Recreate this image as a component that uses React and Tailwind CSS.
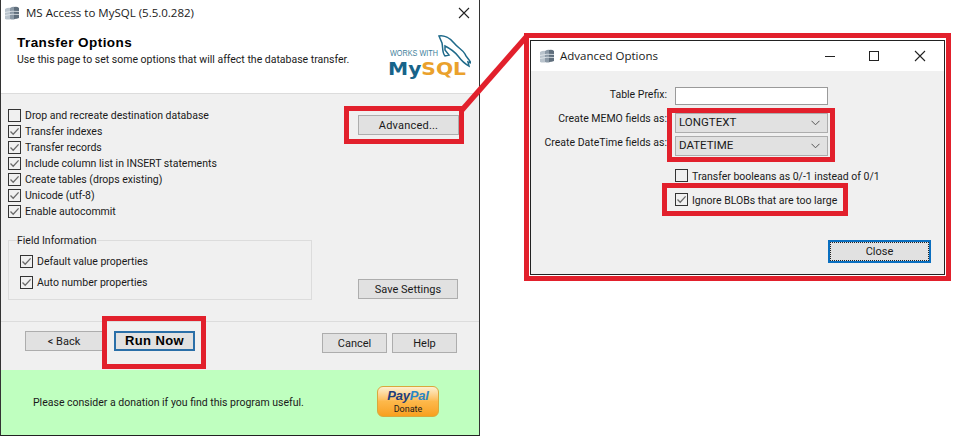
import React from "react";

const ui = "font-['Roboto',sans-serif] text-[10.5px] tracking-normal text-[#1a1a1a]";

const DbIcon = () => (
  <svg width="16" height="16" viewBox="0 0 16 16" className="shrink-0">
    <path d="M1 4 Q4 2 7 3 L7 14 Q4 15 1 14 Z" fill="#b9c3cc" />
    <path d="M6 3 Q9 1 11 2 L11 14 Q9 15 6 14 Z" fill="#8b99a6" />
    <path d="M10 2 Q13 1 15 3 L15 13 Q13 14 10 14 Z" fill="#5f6e7c" />
    <path d="M1 7.5 Q8 5.5 15 6.5 M1 10.5 Q8 8.5 15 9.5" stroke="#e6ebef" strokeWidth="0.8" fill="none" />
  </svg>
);

const Check = ({ checked, label, className = "" }) => (
  <div className={`flex items-center ${className}`}>
    <span className="flex h-[13px] w-[13px] shrink-0 items-center justify-center border border-[#333] bg-[#f0f0f0]">
      {checked && (
        <svg width="11" height="11" viewBox="0 0 11 11">
          <path d="M1.5 5.5 L4.2 8.3 L9.6 2.4" fill="none" stroke="#6b6b6b" strokeWidth="1.3" />
        </svg>
      )}
    </span>
    <span className="ml-[4px] mt-[2px] whitespace-nowrap">{label}</span>
  </div>
);

const Btn = ({ children, className = "" }) => (
  <div className={`flex h-[20px] items-center justify-center border border-[#adadad] bg-[#e1e1e1] pt-[2px] text-[11px] ${className}`}>
    {children}
  </div>
);

const Select = ({ value }) => (
  <div className="flex h-[20px] w-[153px] items-center justify-between border border-[#adadad] bg-[#e1e1e1] pl-[3px] pr-[7px]">
    <span className="text-[11.5px]">{value}</span>
    <svg width="9" height="6" viewBox="0 0 9 6">
      <path d="M0.5 0.8 L4.5 4.8 L8.5 0.8" fill="none" stroke="#555" strokeWidth="1" />
    </svg>
  </div>
);

const MysqlLogo = () => (
  <svg width="84" height="46" viewBox="0 0 84 46" className="shrink-0">
    <path
      d="M52 1 C57 0 63 3 67 8 C71 13 76 15 78 19 C79 22 82 24 84 28 L81 27 L82 31 C78 29 74 25 71 21 C67 16 62 13 58 11 L58 15 L62 20 L58 21 C55 18 56 12 55 8 Z"
      fill="white"
      stroke="#1f6a8a"
      strokeWidth="1.5"
    />
    <text x="3" y="21" fontFamily="Liberation Sans, sans-serif" fontSize="9" textLength="48" lengthAdjust="spacingAndGlyphs" fill="#3f7f9c">
      WORKS WITH
    </text>
    <text x="1" y="40" fontFamily="DejaVu Sans, sans-serif" fontWeight="700" fontSize="18" textLength="78" lengthAdjust="spacingAndGlyphs">
      <tspan fill="#17648a">My</tspan>
      <tspan fill="#eaa12c">SQL</tspan>
    </text>
  </svg>
);

const PayPal = () => (
  <div className="mb-[2px] flex h-[31px] w-[62px] flex-col items-center rounded-[6px] border border-[#d9a83c] bg-gradient-to-b from-[#fdf0cf] via-[#fdb84a] to-[#f8a01c]">
    <span className="mt-[1px] font-['Liberation_Sans',sans-serif] text-[13px] leading-[16px] font-bold italic tracking-[-0.2px] text-[#1f3d7a]">
      Pay<span className="text-[#2a86c5]">Pal</span>
    </span>
    <span className="text-[9px] leading-[11px] text-[#1a1a1a]">Donate</span>
  </div>
);

const MainWindow = () => (
  <div className={`absolute left-0 top-0 flex h-[436px] w-[480px] flex-col border-x border-b border-x-[#333] border-b-[#222] bg-white ${ui}`}>
    <div className="flex h-[26px] shrink-0 items-center pl-[3px] pr-[9px]">
      <DbIcon />
      <span className="ml-[6px] font-['Open_Sans',sans-serif] text-[11.5px]">MS Access to MySQL (5.5.0.282)</span>
      <svg width="12" height="12" viewBox="0 0 12 12" className="ml-auto">
        <path d="M1 1 L11 11 M11 1 L1 11" stroke="#222" strokeWidth="1.1" />
      </svg>
    </div>
    <div className="flex h-[68px] shrink-0 items-start justify-between border-b border-[#dcdcdc] pl-[16px] pr-[8px]">
      <div className="pt-[8px]">
        <h1 className="font-['Liberation_Sans',sans-serif] text-[13.5px] leading-[17px] font-bold tracking-[0.45px] text-black">Transfer Options</h1>
        <p className="mt-[2px] leading-[14px]">Use this page to set some options that will affect the database transfer.</p>
      </div>
      <div className="pt-[9px]">
        <MysqlLogo />
      </div>
    </div>
    <div className="flex h-[227px] shrink-0 justify-between bg-[#f0f0f0] pl-[7px] pr-[20px] pt-[13px]">
      <div className="flex w-[304px] flex-col">
        <Check label="Drop and recreate destination database" className="h-[16px]" />
        <Check checked label="Transfer indexes" className="h-[16px]" />
        <Check checked label="Transfer records" className="h-[16px]" />
        <Check checked label="Include column list in INSERT statements" className="h-[16px]" />
        <Check checked label="Create tables (drops existing)" className="h-[16px]" />
        <Check checked label="Unicode (utf-8)" className="h-[16px]" />
        <Check checked label="Enable autocommit" className="h-[16px]" />
        <fieldset className="mt-[14px] h-[67px] border border-[#dcdcdc] pl-[11px]">
          <legend className="-ml-[3px] translate-y-[1px] leading-[14px]">Field Information</legend>
          <Check checked label="Default value properties" className="mt-[6px] h-[16px]" />
          <Check checked label="Auto number properties" className="mt-[5px] h-[16px]" />
        </fieldset>
      </div>
      <div className="flex h-[192px] flex-col justify-between pt-[8px]">
        <Btn className="w-[101px] tracking-[0.2px]">Advanced...</Btn>
        <Btn className="w-[100px]">Save Settings</Btn>
      </div>
    </div>
    <div className="flex h-[49px] shrink-0 items-start border-t border-[#dcdcdc] bg-[#f0f0f0] pl-[24px] pr-[21px] pt-[9px]">
      <Btn className="w-[78px]">&lt; Back</Btn>
      <div className="ml-[11px] flex h-[20px] w-[81px] items-center justify-center border-2 border-[#2a6fa8] bg-[#e1e1e1] font-['Liberation_Sans',sans-serif] text-[13px] font-bold tracking-[0.4px] text-black">
        Run Now
      </div>
      <div className="ml-auto mr-[1px] flex gap-[5px] pt-[2px]">
        <Btn className="w-[65px]">Cancel</Btn>
        <Btn className="w-[65px]">Help</Btn>
      </div>
    </div>
    <div className="flex flex-1 items-center justify-between bg-[#bfffbf] pl-[32px] pr-[40px]">
      <span>Please consider a donation if you find this program useful.</span>
      <PayPal />
    </div>
  </div>
);

const OptionsDialog = () => (
  <div className={`absolute left-[530px] top-[40px] flex h-[235px] w-[415px] flex-col border border-[#222] bg-[#f0f0f0] ${ui}`}>
    <div className="flex h-[30px] shrink-0 items-center bg-white pl-[8px]">
      <DbIcon />
      <span className="ml-[5px] font-['Open_Sans',sans-serif] text-[11.5px]">Advanced Options</span>
      <div className="ml-auto flex items-center">
        <svg width="12" height="12" viewBox="0 0 12 12">
          <path d="M1 6.5 L11 6.5" stroke="#222" strokeWidth="1" />
        </svg>
        <svg width="12" height="12" viewBox="0 0 12 12" className="ml-[32px]">
          <rect x="1.5" y="1.5" width="9" height="9" fill="none" stroke="#222" strokeWidth="1" />
        </svg>
        <svg width="12" height="12" viewBox="0 0 12 12" className="ml-[34px] mr-[18px]">
          <path d="M1 1 L11 11 M11 1 L1 11" stroke="#222" strokeWidth="1.1" />
        </svg>
      </div>
    </div>
    <div className="flex flex-col pt-[16px]">
      <div className="flex items-start gap-[8px]">
        <span className="w-[136px] text-right leading-[15px]">Table Prefix:</span>
        <div className="h-[18px] w-[153px] border border-[#9a9a9a] bg-white" />
      </div>
      <div className="mt-[8px] flex items-start gap-[8px]">
        <span className="w-[136px] -mt-[2px] text-right leading-[15px]">Create MEMO fields as:</span>
        <Select value="LONGTEXT" />
      </div>
      <div className="mt-[3px] flex items-start gap-[8px]">
        <span className="w-[136px] -mt-[1px] text-right leading-[15px]">Create DateTime fields as:</span>
        <Select value="DATETIME" />
      </div>
      <div className="pl-[144px]">
        <Check label="Transfer booleans as 0/-1 instead of 0/1" className="mt-[13px] h-[13px]" />
        <Check checked label="Ignore BLOBs that are too large" className="mt-[11px] h-[13px]" />
        <div className="mt-[34px] ml-[153px] flex h-[23px] w-[103px] items-center justify-center border-2 border-[#0a6fc0] bg-[#e1e1e1] pt-[2px] text-[11px] outline-1 -outline-offset-3 outline-dotted outline-[#222]">
          Close
        </div>
      </div>
    </div>
  </div>
);

const RedBox = ({ className }) => <div className={`pointer-events-none absolute border-[5px] border-[#e2202c] ${className}`} />;

export default function App() {
  return (
    <div className="relative h-[436px] w-[967px] overflow-hidden bg-white">
      <MainWindow />
      <OptionsDialog />
      {/* annotations drawn over the windows */}
      <RedBox className="left-[344px] top-[106px] h-[38px] w-[120px]" />
      <RedBox className="left-[102px] top-[316px] h-[53px] w-[104px]" />
      <RedBox className="left-[667px] top-[108px] h-[54px] w-[168px]" />
      <RedBox className="left-[662px] top-[183px] h-[33px] w-[186px]" />
      <RedBox className="left-[524px] top-[33px] h-[248px] w-[427px]" />
      <svg width="967" height="436" className="pointer-events-none absolute left-0 top-0">
        <path d="M462 110 L527 36" stroke="#e2202c" strokeWidth="5.5" fill="none" />
      </svg>
    </div>
  );
}
